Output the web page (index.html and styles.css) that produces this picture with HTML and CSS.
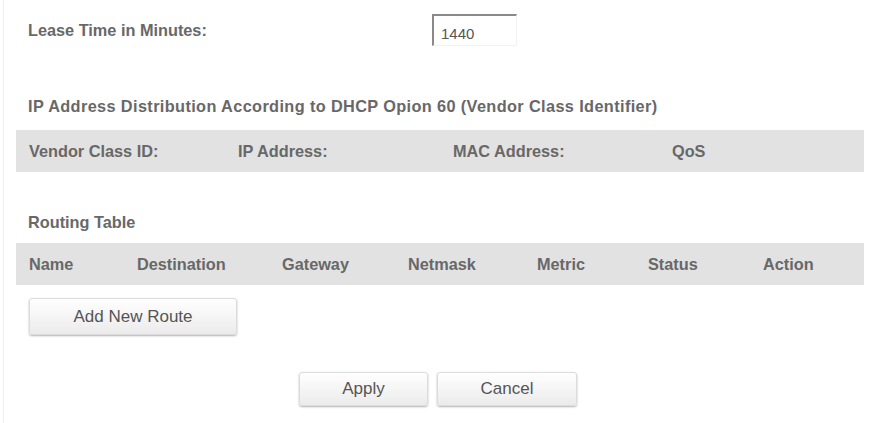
FILE: index.html
```html
<!DOCTYPE html>
<html>
<head>
<meta charset="utf-8">
<link rel="stylesheet" href="styles.css">
</head>
<body>
<div class="page">
  <div class="lease-row">
    <span class="label lease-label">Lease Time in Minutes:</span>
    <input class="lease-input" type="text" value="1440">
  </div>

  <div class="heading heading-ip">IP Address Distribution According to DHCP Opion 60 (Vendor Class Identifier)</div>
  <div class="bar bar-vendor">
    <span>Vendor Class ID:</span>
    <span>IP Address:</span>
    <span>MAC Address:</span>
    <span>QoS</span>
  </div>

  <div class="heading heading-route">Routing Table</div>
  <div class="bar bar-route">
    <span>Name</span>
    <span>Destination</span>
    <span>Gateway</span>
    <span>Netmask</span>
    <span>Metric</span>
    <span>Status</span>
    <span>Action</span>
  </div>

  <button class="btn btn-add" type="button">Add New Route</button>

  <div class="actions">
    <button class="btn btn-apply" type="button">Apply</button>
    <button class="btn btn-cancel" type="button">Cancel</button>
  </div>
</div>
</body>
</html>
```

FILE: styles.css
```css
html, body {
  margin: 0;
  padding: 0;
  background: #ffffff;
}

body {
  font-family: "Liberation Sans", Arial, Helvetica, sans-serif;
  color: #666666;
}

.page {
  margin-left: 3px;
  border-left: 1px solid #efefef;
  height: 423px;
  box-sizing: border-box;
  padding: 14px 6px 0 12px;
}

.label,
.heading,
.bar span {
  font-weight: bold;
  font-size: 16.3px;
  color: #686868;
}

.lease-row {
  display: flex;
  align-items: center;
  height: 32px;
  padding-left: 12px;
}

.lease-label {
  width: 404px;
  flex: none;
  padding-top: 1px;
}

.lease-input {
  width: 85px;
  height: 32px;
  box-sizing: border-box;
  margin: 0;
  padding: 5px 0 0 7px;
  border-style: solid;
  border-width: 2px 1px 1px 2px;
  border-color: #8a8a8a #f2f2f2 #f2f2f2 #8a8a8a;
  background: #ffffff;
  font-family: "Liberation Sans", Arial, sans-serif;
  font-size: 15px;
  color: #555555;
  outline: none;
}

.heading {
  line-height: 20px;
  padding-left: 12px;
}

.heading-ip {
  margin-top: 50px;
  letter-spacing: 0.38px;
}

.heading-route {
  margin-top: 40px;
}

.bar {
  background: #e2e2e2;
  height: 42px;
  display: grid;
  align-items: center;
  padding-left: 13px;
  padding-top: 1px;
  box-sizing: border-box;
}

.bar-vendor {
  margin-top: 14px;
  grid-template-columns: 209px 215px 219px 1fr;
}

.bar-route {
  margin-top: 11px;
  grid-template-columns: 108px 145px 126px 129px 111px 115px 1fr;
}

.btn {
  display: block;
  height: 37px;
  box-sizing: border-box;
  border: 1px solid #dcdcdc;
  border-radius: 3px;
  background: linear-gradient(#ffffff, #ebebeb);
  box-shadow: 0 1px 2px rgba(0, 0, 0, 0.3);
  font-family: "Liberation Sans", Arial, sans-serif;
  font-size: 17px;
  color: #555555;
  padding: 0;
  cursor: pointer;
}

.btn-add {
  margin: 13px 0 0 13px;
  width: 208px;
}

.actions {
  display: flex;
  justify-content: center;
  gap: 9px;
  margin-top: 37px;
  padding-right: 4px;
}

.btn-apply {
  width: 129px;
  height: 34px;
}

.btn-cancel {
  width: 140px;
  height: 34px;
}
```
